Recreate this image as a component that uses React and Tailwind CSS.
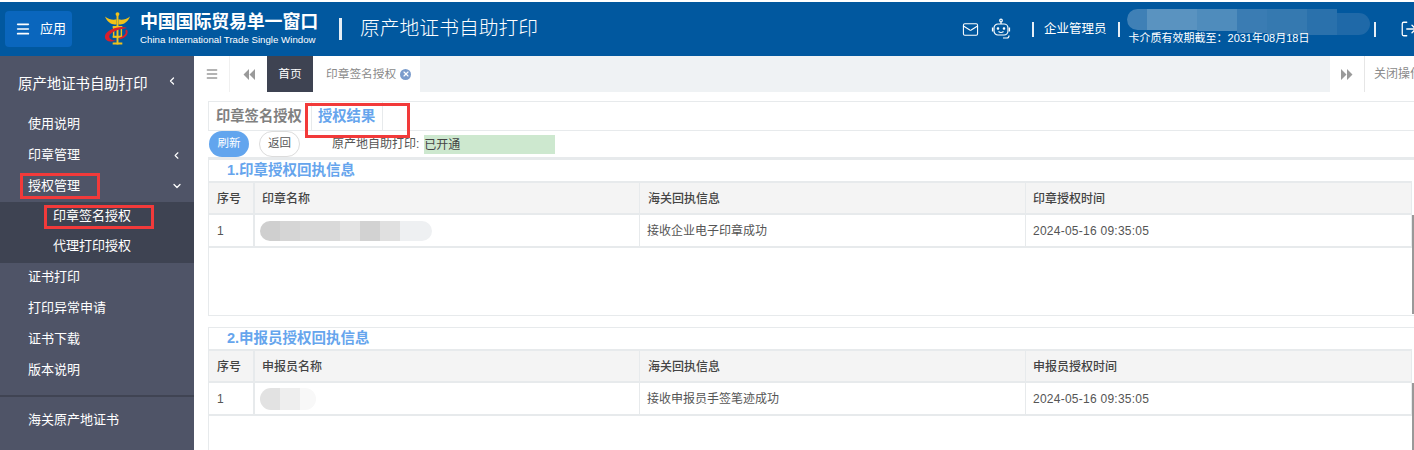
import React from 'react'
import { Menu, Mail, ChevronLeft, ChevronDown, LogOut, X } from 'lucide-react'

const font = { fontFamily: '"Liberation Sans", "Noto Sans CJK SC", sans-serif' }

const SIDE_TOP = [
  { label: '使用说明', h: 'h-[31px]' },
  { label: '印章管理', h: 'h-[31px]', icon: 'left' },
  { label: '授权管理', h: 'h-[30px]', icon: 'down', boxed: true },
]
const SIDE_SUB = [
  { label: '印章签名授权', boxed: true },
  { label: '代理打印授权' },
]
const SIDE_BOTTOM = ['证书打印', '打印异常申请', '证书下载', '版本说明']

function SideItem({ item }) {
  return (
    <div className={`${item.h} relative flex items-center pb-[3px] pl-[28px] pr-[12px] text-[13px] text-white`}>
      <span className="flex-1">{item.label}</span>
      {item.icon === 'left' && <ChevronLeft size={11} strokeWidth={2.5} />}
      {item.icon === 'down' && <ChevronDown size={12} strokeWidth={2.5} className="-mr-px" />}
      {item.boxed && (
        <div className="absolute left-[20px] top-[1px] h-[26px] w-[80px] border-[3px] border-[#f23a3a]" />
      )}
    </div>
  )
}

function Sidebar() {
  return (
    <aside className="w-[194px] shrink-0 bg-[#4f5467] flex flex-col">
      <div className="h-[52px] shrink-0 flex items-center pl-[18px] pr-[16px] text-[14.4px] text-white">
        <span className="flex-1 pt-[5px]">原产地证书自助打印</span>
        <ChevronLeft size={12} strokeWidth={2.5} className="-mt-[3px]" />
      </div>
      <div className="pt-[2px]">
        {SIDE_TOP.map((item) => (
          <SideItem key={item.label} item={item} />
        ))}
      </div>
      <div className="bg-[#3e4352] h-[61px] flex flex-col">
        {SIDE_SUB.map((item) => (
          <div key={item.label} className="relative h-[30px] flex items-center pb-[3px] pl-[53px] text-[13px] text-white">
            {item.label}
            {item.boxed && (
              <div className="absolute left-[44px] top-[3px] h-[24px] w-[110px] border-[3px] border-[#f23a3a]" />
            )}
          </div>
        ))}
      </div>
      {SIDE_BOTTOM.map((label) => (
        <div key={label} className="h-[30.8px] flex items-center pb-[3px] pl-[28px] text-[13px] text-white">
          {label}
        </div>
      ))}
      <div className="mt-[9px] h-[2px] bg-[#404453]" />
      <div className="h-[45px] flex items-center pl-[28px] text-[13px] text-white">海关原产地证书</div>
    </aside>
  )
}

function Logo() {
  return (
    <svg width="27" height="36" viewBox="0 0 28 36" className="shrink-0">
      <path d="M14 2 V34" stroke="#f2c21a" strokeWidth="2" />
      <circle cx="14" cy="2.5" r="2" fill="#f2c21a" />
      <path d="M1 5 C4 12 9 14 13 13 V8 C9 9 5 8 1 5 Z" fill="#f2c21a" />
      <path d="M27 5 C24 12 19 14 15 13 V8 C19 9 23 8 27 5 Z" fill="#f2c21a" />
      <path d="M9 16 H19 M9 26 H19 M9 33 H19" stroke="#f2c21a" strokeWidth="2" />
      <rect x="10" y="17" width="8" height="9" fill="none" stroke="#f2c21a" strokeWidth="1.5" />
      <path d="M24 17 C17 14 3 18 1 25 C0 31 7 32 13 30 C8 30 4 28 6 24 C9 20 17 18 24 17 Z" fill="#d81e2c" />
      <path d="M23 19 C25 23 21 27 16 28" fill="none" stroke="#d81e2c" strokeWidth="2" />
    </svg>
  )
}

// robot head from the header, no matching icon in the packs
function RobotIcon() {
  return (
    <svg width="20" height="22" viewBox="0 0 20 22" fill="none" stroke="white" strokeWidth="1.2" className="ml-[12px] shrink-0">
      <circle cx="10" cy="2.5" r="1.3" />
      <path d="M10 4 V6" />
      <rect x="3" y="6" width="14" height="11" rx="4" />
      <path d="M1.5 9.5 V13.5 M18.5 9.5 V13.5" />
      <circle cx="7" cy="10.5" r="0.7" fill="white" />
      <circle cx="13" cy="10.5" r="0.7" fill="white" />
      <path d="M7.5 13.5 C9 14.7 11 14.7 12.5 13.5" />
      <path d="M12 20 H16 C17.5 20 18 19 18 17.5" />
    </svg>
  )
}

function HeaderBlur() {
  return (
    <div className="absolute left-[-2px] top-[7px] flex items-start h-[27px] w-[243px]">
      <div className="w-[20px] h-[21px] rounded-l-full bg-[#3f80b6]" />
      <div className="w-[50px] h-[21px] bg-[#5a93c0]" />
      <div className="w-[40px] h-[22px] bg-[#4f8cbc]" />
      <div className="w-[30px] h-[24px] bg-[#3a7cb3]" />
      <div className="w-[40px] h-[26px] bg-[#3579b0]" />
      <div className="w-[30px] h-[26px] bg-[#2a71ac]" />
      <div className="w-[33px] h-[22px] mt-[4px] bg-[#1f69a8] rounded-r-[12px]" />
    </div>
  )
}

function Header() {
  return (
    <header className="h-[54px] shrink-0 bg-[#01589f] flex items-center text-white">
      <div className="ml-[5px] w-[67px] h-[36px] rounded-[4px] bg-[#0a66bd] flex items-center pl-[10px] gap-[9px] text-[13px]">
        <Menu size={16} strokeWidth={2.5} />
        <span>应用</span>
      </div>
      <div className="ml-[32px] flex items-center gap-[9px]">
        <Logo />
        <div className="flex flex-col">
          <span className="text-[18px] font-bold leading-[21px] tracking-[-0.2px]">中国国际贸易单一窗口</span>
          <span className="text-[9.7px] leading-[12px] mt-[1px]">China International Trade Single Window</span>
        </div>
      </div>
      <span className="ml-[21px] h-[22px] w-[3px] bg-white/90" />
      <span className="ml-[18px] text-[19.8px] font-light">原产地证书自助打印</span>
      <div className="flex-1" />
      <div className="w-[452px] h-full shrink-0 overflow-hidden flex items-center">
        <Mail size={17} strokeWidth={1.5} className="shrink-0" />
        <RobotIcon />
        <span className="ml-[21px] h-[15px] w-[2px] bg-white/90 shrink-0" />
        <span className="ml-[10px] text-[12.5px] whitespace-nowrap">企业管理员</span>
        <span className="ml-[11px] h-[15px] w-[2px] bg-white/90 shrink-0" />
        <div className="relative ml-[9px] w-[244px] shrink-0 h-full flex items-end pb-[11px] text-[11px] leading-[14px]">
          <HeaderBlur />
          <span className="relative whitespace-nowrap">卡介质有效期截至：2031年08月18日</span>
        </div>
        <span className="ml-[1px] h-[15px] w-[2px] bg-white/90 shrink-0" />
        <LogOut size={18} strokeWidth={1.7} className="ml-[24px] shrink-0" />
      </div>
    </header>
  )
}

function TriangleIcon({ flip }) {
  return (
    <svg width="12" height="11" viewBox="0 0 12 11" fill="#9a9a9a" className={flip ? 'rotate-180' : ''}>
      <path d="M6 0 V11 L0.5 5.5 Z M12 0 V11 L6.5 5.5 Z" />
    </svg>
  )
}

function TabsBar() {
  return (
    <div className="h-[36px] shrink-0 bg-[#eff2f4] flex items-stretch text-[12px] text-[#8a8a8a]">
      <div className="w-[36px] bg-white border-r border-[#f0f0f0] flex items-center justify-center">
        <Menu size={14} strokeWidth={2.5} className="text-[#9a9a9a]" />
      </div>
      <div className="w-[37px] bg-white flex items-center justify-center">
        <TriangleIcon />
      </div>
      <div className="w-[46px] bg-[#3e4352] text-white text-[11.7px] flex items-center justify-center">首页</div>
      <div className="w-[107px] bg-white flex items-center pl-[13px] gap-[4px] text-[11.7px]">
        <span>印章签名授权</span>
        <span className="w-[11px] h-[11px] rounded-full bg-[#7b9ccc] flex items-center justify-center">
          <X size={8} strokeWidth={3.5} className="text-white" />
        </span>
      </div>
      <div className="flex-1" />
      <div className="w-[35px] bg-white border-r border-[#e6e6e6] flex items-center justify-center">
        <TriangleIcon flip />
      </div>
      <div className="w-[49px] bg-white pl-[9px] flex items-center whitespace-nowrap overflow-hidden">关闭操作</div>
    </div>
  )
}

const cols = 'grid grid-cols-[46px_385px_386px_1fr] mr-[2px]'

function Blur({ blocks, className }) {
  return (
    <div className={`flex overflow-hidden rounded-full ${className}`}>
      {blocks.map((c, i) => (
        <div key={i} className="w-[20px] shrink-0" style={{ background: c }} />
      ))}
    </div>
  )
}

function RecordTable({ num, title, head, receipt, blur, className, barClass }) {
  return (
    <section className={`relative border border-[#e7eaec] border-r-0 ${className}`}>
      <div className="h-[21px] pl-[18px] pt-[1px] flex items-center text-[14.5px] font-bold text-[#66a5ed]">
        {num}.{title}
      </div>
      <div className={`${cols} h-[34px] bg-[#f4f4f4] border-y-2 border-[#e7eaec] text-[12px] font-medium text-[#444]`}>
        <div className="pl-[8px] pt-[1px] flex items-center border-r-2 border-[#e7eaec]">序号</div>
        <div className="pl-[7px] pt-[1px] flex items-center border-r border-[#e7eaec]">{head[0]}</div>
        <div className="pl-[8px] pt-[1px] flex items-center border-r border-[#e7eaec]">海关回执信息</div>
        <div className="pl-[7px] pt-[1px] flex items-center border-r border-[#e7eaec]">{head[1]}</div>
      </div>
      <div className={`${cols} h-[33px] border-b-2 border-[#e7eaec] text-[12px] text-[#555]`}>
        <div className="pl-[8px] flex items-center border-r-2 border-[#e7eaec]">1</div>
        <div className="pl-[5px] flex items-center border-r border-[#e7eaec]">{blur}</div>
        <div className="pl-[7px] flex items-center border-r border-[#e7eaec]">{receipt}</div>
        <div className="pl-[7px] flex items-center border-r border-[#e7eaec] tracking-[0.25px]">2024-05-16 09:35:05</div>
      </div>
      <div className={`absolute right-0 top-[55px] w-[2px] bg-[#999] ${barClass}`} />
    </section>
  )
}

function Content() {
  return (
    <div className="pl-[14px] pt-[9px]">
      <div className="relative h-[30px] flex items-stretch border border-[#e7eaec] border-r-0 text-[14.3px] font-bold">
        <div className="w-[102px] flex items-center pl-[7px] pt-[2px] text-[#808080]">印章签名授权</div>
        <div className="w-[72px] border-x border-[#e7eaec] flex items-center pl-[6px] pt-[2px] text-[#66a5ed]">授权结果</div>
        <div className="absolute left-[96px] top-[1px] h-[35px] w-[105px] border-[3px] border-[#f23a3a]" />
      </div>
      <div className="h-[28px] border-b-2 border-[#e7eaec] flex items-center text-[12px] text-[#555]">
        <span className="ml-[1px] w-[40px] h-[26px] rounded-full bg-[#62a5ee] text-white text-[11.5px] flex items-center justify-center">刷新</span>
        <span className="ml-[10px] w-[41px] h-[26px] rounded-full border border-[#dcdcdc] text-[11.5px] flex items-center justify-center">返回</span>
        <span className="ml-[32px] text-[#555]">原产地自助打印:</span>
        <span className="ml-[5px] w-[131px] h-[19px] pt-[2px] bg-[#cde8cf] text-[#444] flex items-center">已开通</span>
      </div>
      <RecordTable
        className="h-[157px]"
        barClass="h-[99px]"
        num="1"
        title="印章授权回执信息"
        head={['印章名称', '印章授权时间']}
        receipt="接收企业电子印章成功"
        blur={<Blur className="h-[20px] w-[172px]" blocks={['#cfcfcf', '#d5d5d5', '#d9d9d9', '#d9d9d9', '#e3e3e3', '#d2d2d2', '#e0e0e0', '#eef0f2', '#eef0f2']} />}
      />
      <RecordTable
        className="mt-[11px] h-[200px]"
        barClass="bottom-0"
        num="2"
        title="申报员授权回执信息"
        head={['申报员名称', '申报员授权时间']}
        receipt="接收申报员手签笔迹成功"
        blur={<Blur className="h-[22px] w-[56px]" blocks={['#e2e2e2', '#eeeeee', '#f8f8f8']} />}
      />
    </div>
  )
}

export default function App() {
  return (
    <div className="w-[1414px] h-[450px] overflow-hidden bg-white flex flex-col" style={font}>
      <div className="h-[2px] shrink-0 bg-white" />
      <Header />
      <div className="flex flex-1 min-h-0">
        <Sidebar />
        <main className="flex-1 min-w-0 flex flex-col">
          <TabsBar />
          <Content />
        </main>
      </div>
    </div>
  )
}
